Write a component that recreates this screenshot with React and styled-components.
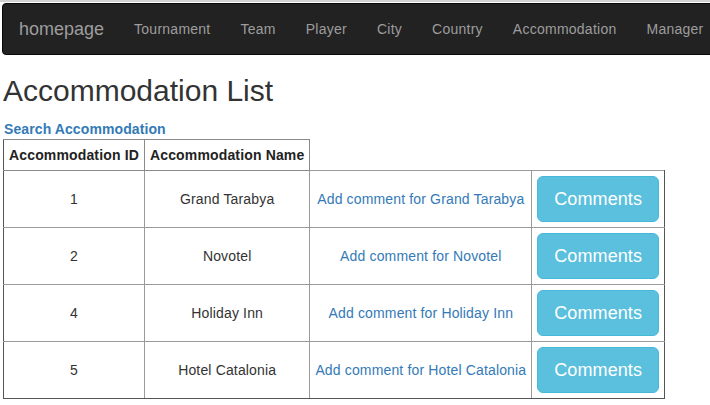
import React from "react";
import styled, { createGlobalStyle } from "styled-components";

const Global = createGlobalStyle`
  html, body { margin: 0; padding: 0; background: #fff; overflow-x: hidden; }
  body { font-family: "Liberation Sans", Arial, sans-serif; font-size: 14px; line-height: 1.428571; color: #333; }
  * { box-sizing: border-box; }
`;

const Page = styled.div`
  border-top: 2px solid #d2d2d2;
  overflow: hidden;
`;

const Navbar = styled.nav`
  display: flex;
  align-items: center;
  height: 52px;
  margin: 1px -40px 19px 2px;
  background: #222;
  border: 1px solid #080808;
  border-radius: 4px;
  white-space: nowrap;
`;

const Brand = styled.a`
  padding: 0 15px 0 16px;
  font-size: 18px;
  line-height: 20px;
  color: #9d9d9d;
  text-decoration: none;
`;

const NavLink = styled.a`
  padding: 0 15px;
  font-size: 14px;
  line-height: 20px;
  letter-spacing: 0.25px;
  color: #9d9d9d;
  text-decoration: none;
`;

const Content = styled.div`
  padding-left: 3px;
`;

const Title = styled.h2`
  margin: 0 0 12px 0;
  font-size: 30px;
  font-weight: 500;
  line-height: 1.1;
  color: #333;
`;

const SearchLink = styled.a`
  display: block;
  padding-left: 1px;
  font-size: 14px;
  font-weight: bold;
  line-height: 20px;
  letter-spacing: 0.1px;
  color: #337ab7;
  text-decoration: none;
`;

const Table = styled.table`
  border-collapse: collapse;
  border-spacing: 0;
`;

const Th = styled.th`
  padding: 5px;
  border: 1px solid #8a8a8a;
  font-weight: bold;
  color: #222;
  text-align: left;
  line-height: 20px;
  letter-spacing: 0.15px;
  white-space: nowrap;
  ${(p) => (p.$first ? "border-left-color: #555;" : "")}
`;

const Td = styled.td`
  padding: 5px;
  border: 1px solid #9a9a9a;
  text-align: center;
  vertical-align: middle;
  line-height: 20px;
  letter-spacing: 0.15px;
  white-space: nowrap;
  ${(p) => (p.$first ? "border-left-color: #555;" : "")}
  ${(p) => (p.$last ? "border-right-color: #555;" : "")}
  ${(p) => (p.$bottom ? "border-bottom-color: #555;" : "")}
`;

const CommentLink = styled.a`
  color: #337ab7;
  text-decoration: none;
`;

const Button = styled.button`
  display: inline-block;
  padding: 10px 16px;
  font-family: "Liberation Sans", Arial, sans-serif;
  font-size: 18px;
  line-height: 1.3333333;
  letter-spacing: 0.1px;
  color: #fff;
  background: #5bc0de;
  border: 1px solid #46b8da;
  border-radius: 6px;
  cursor: pointer;
`;

const navItems = ["Tournament", "Team", "Player", "City", "Country", "Accommodation", "Manager"];

const rows = [
  { id: 1, name: "Grand Tarabya" },
  { id: 2, name: "Novotel" },
  { id: 4, name: "Holiday Inn" },
  { id: 5, name: "Hotel Catalonia" },
];

export default function App() {
  return (
    <Page>
      <Global />
      <Navbar>
        <Brand href="#">homepage</Brand>
        {navItems.map((n) => (
          <NavLink key={n} href="#">{n}</NavLink>
        ))}
      </Navbar>
      <Content>
        <Title>Accommodation List</Title>
        <SearchLink href="#">Search Accommodation</SearchLink>
        <Table>
          <thead>
            <tr>
              <Th $first>Accommodation ID</Th>
              <Th>Accommodation Name</Th>
            </tr>
          </thead>
          <tbody>
            {rows.map((r, i) => {
              const bottom = i === rows.length - 1;
              return (
                <tr key={r.id}>
                  <Td $first $bottom={bottom}>{r.id}</Td>
                  <Td $bottom={bottom}>{r.name}</Td>
                  <Td $bottom={bottom}>
                    <CommentLink href="#">Add comment for {r.name}</CommentLink>
                  </Td>
                  <Td $last $bottom={bottom}>
                    <Button>Comments</Button>
                  </Td>
                </tr>
              );
            })}
          </tbody>
        </Table>
      </Content>
    </Page>
  );
}
